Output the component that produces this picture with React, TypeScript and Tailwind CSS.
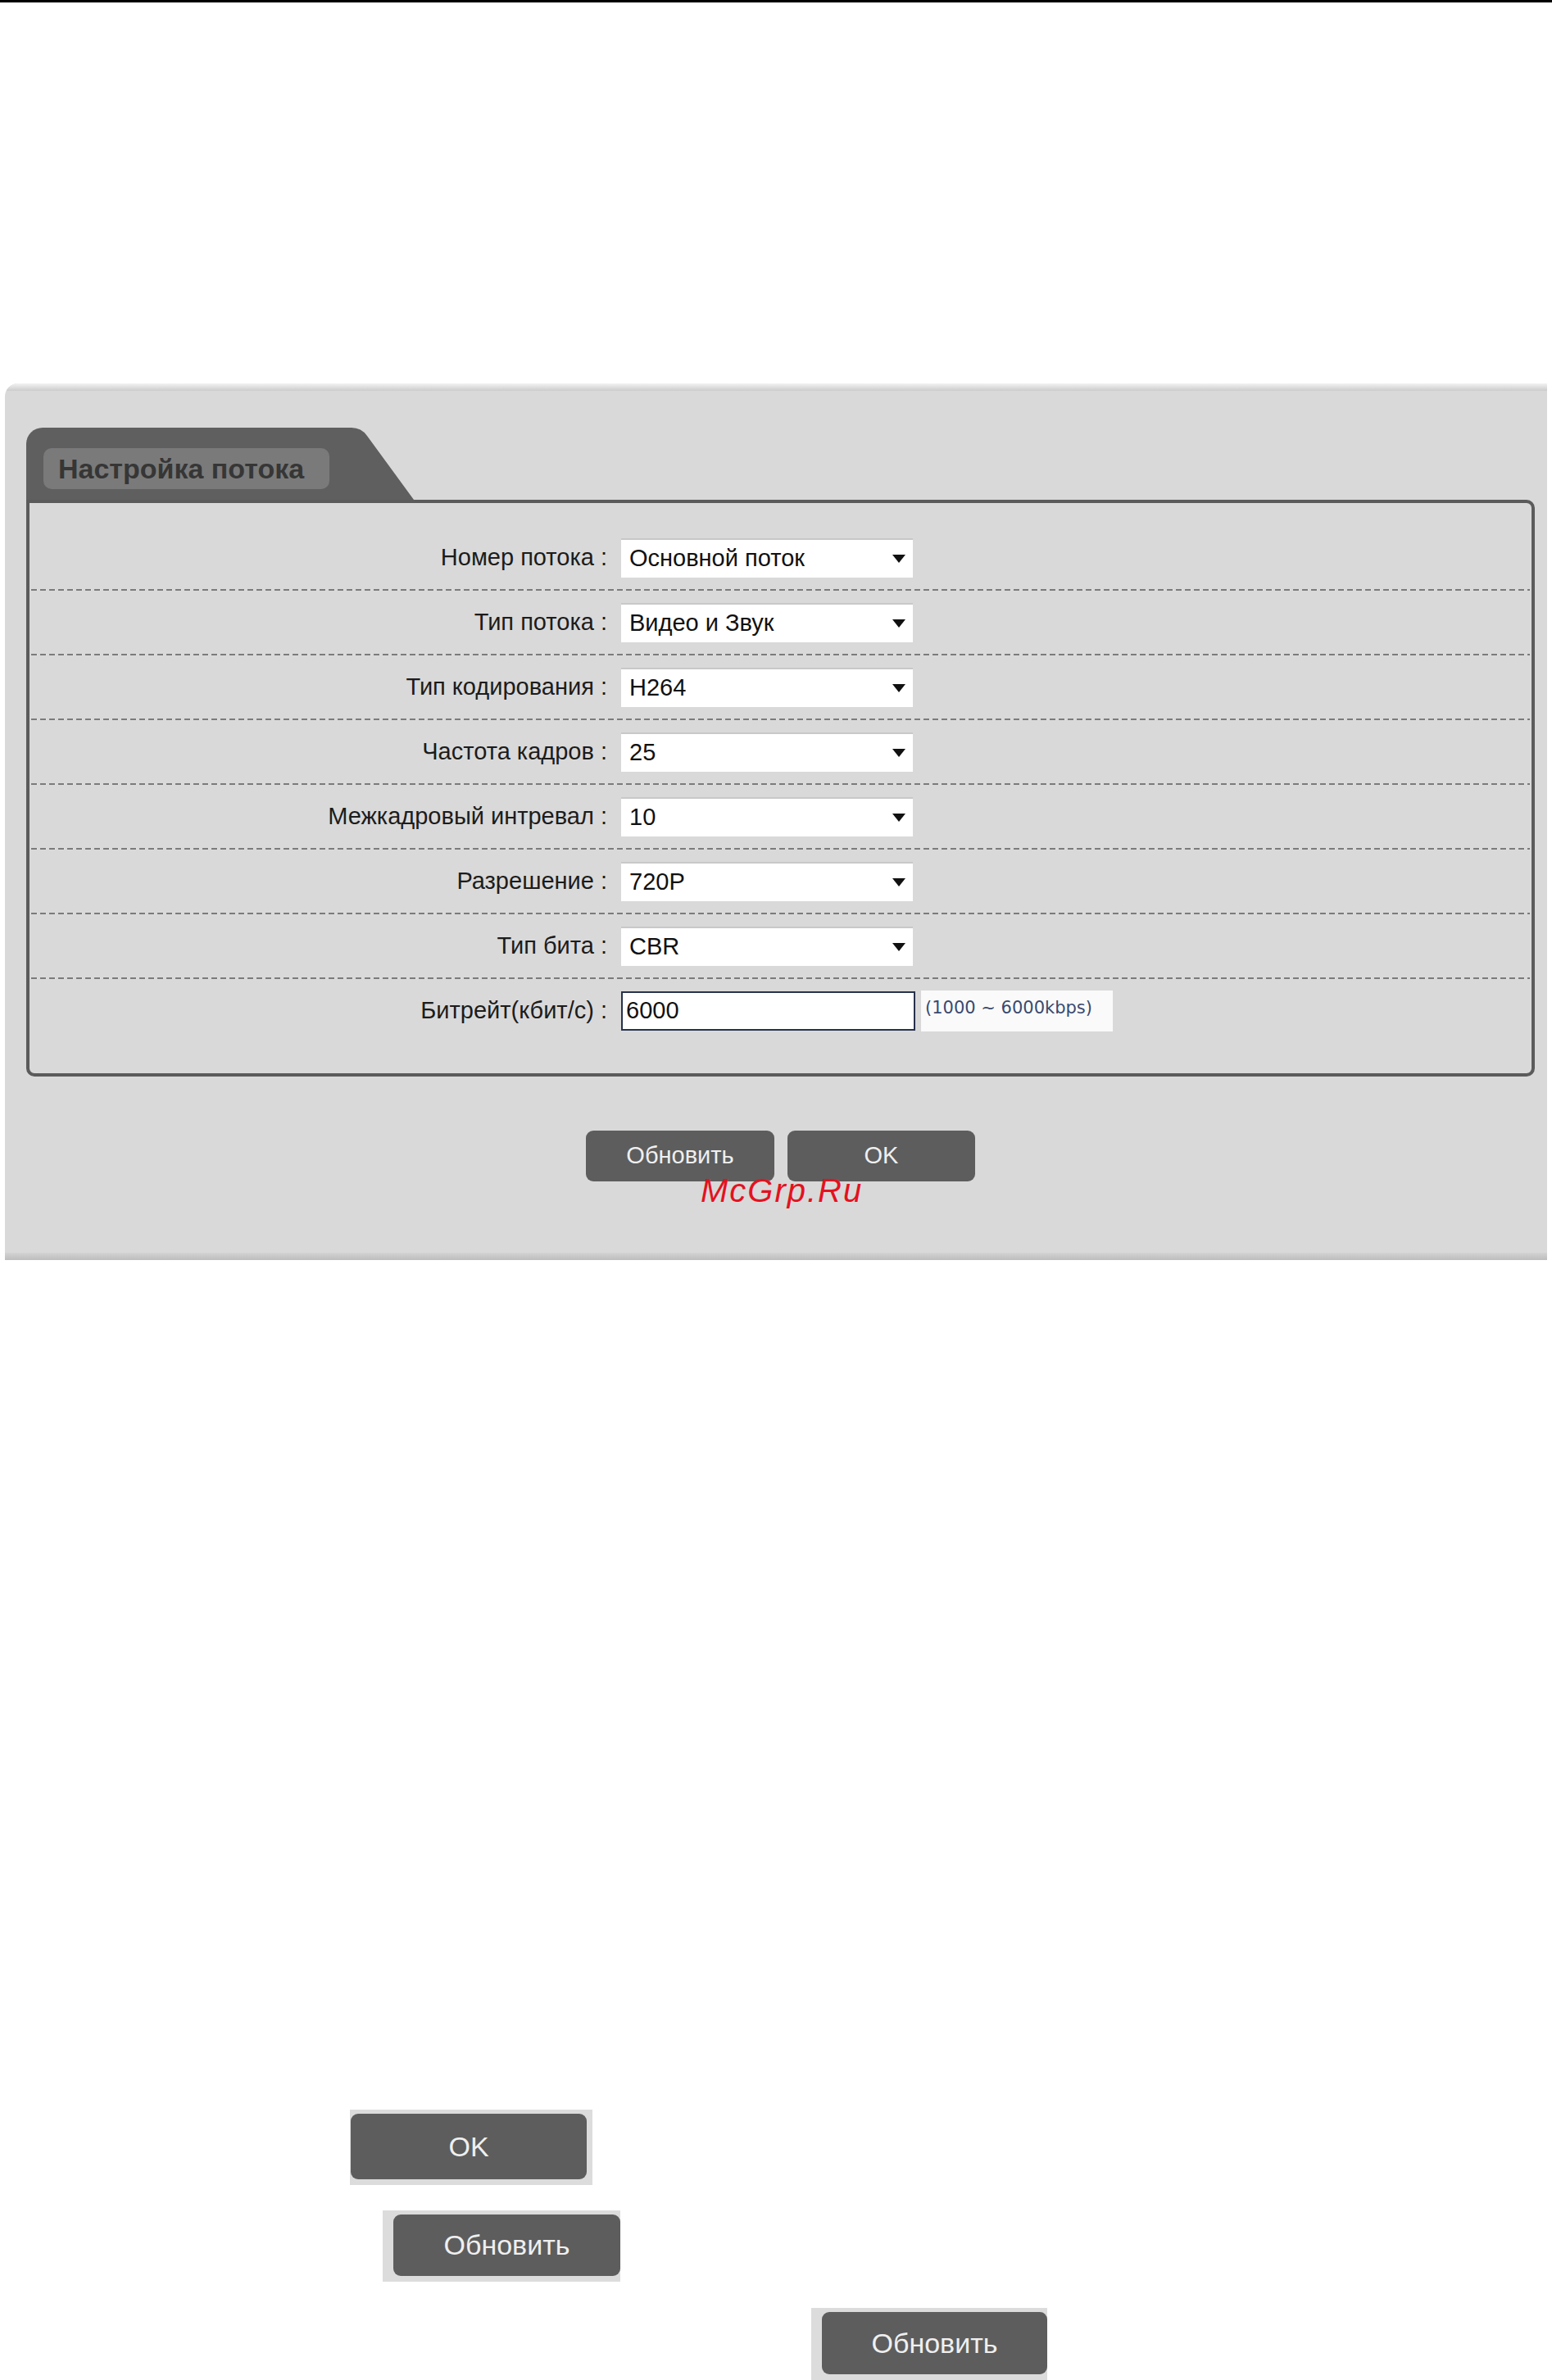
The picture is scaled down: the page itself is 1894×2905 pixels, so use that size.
const rows = [
  { label: "Номер потока", value: "Основной поток" },
  { label: "Тип потока", value: "Видео и Звук" },
  { label: "Тип кодирования", value: "H264" },
  { label: "Частота кадров", value: "25" },
  { label: "Межкадровый интревал", value: "10" },
  { label: "Разрешение", value: "720P" },
  { label: "Тип бита", value: "CBR" },
];

const Dashed = () => (
  <div className="mx-[2px] h-[2px] bg-[repeating-linear-gradient(90deg,#7b7b7b_0px,#7b7b7b_7px,#e4e4e4_7px,#e4e4e4_8px,transparent_8px,transparent_11px)]" />
);

const Select = ({ value }: { value: string }) => (
  <div className="w-[356px] h-[48px] bg-white border-t-2 border-[#c8c8c8] flex items-center justify-between pl-[10px] pr-[9px] text-[29px] text-[#111]">
    <span>{value}</span>
    <svg width="16" height="10" viewBox="0 0 16 10">
      <path d="M0 0H16L8 10Z" fill="#111" />
    </svg>
  </div>
);

const Row = ({ label, children }: { label: string; children: React.ReactNode }) => (
  <div className="h-[77px] flex items-center">
    <div className="w-[705px] text-right text-[29px] text-[#1c1c1c] whitespace-pre">{label} :</div>
    <div className="ml-[17px] flex items-center">{children}</div>
  </div>
);

const DarkButton = ({ label, className }: { label: string; className: string }) => (
  <button className={"bg-[#5d5d5d] rounded-[9px] text-[#efefef] flex items-center justify-center " + className}>
    {label}
  </button>
);

const App = () => {
  return (
    <div className="min-h-[2905px] bg-white font-['Liberation_Sans',Arial,sans-serif]">
      <div className="h-[3px] bg-black" />

      <div className="relative ml-[6px] mt-[465px] w-[1882px] h-[1070px] bg-[#d9d9d9] rounded-tl-[16px] flex flex-col overflow-hidden">
        <div className="h-[9px] bg-gradient-to-b from-[#f3f3f3] to-[#cbcbcb]" />
        <div className="pl-[26px] pr-[15px] pt-[45px]">
          <div className="flex h-[88px]">
            <div className="w-[383px] bg-[#5f5f5f] rounded-tl-[20px] pl-[21px] pt-[25px]">
              <div className="w-[349px] h-[50px] rounded-[10px] bg-[#7a7a7a] pl-[18px] flex items-center text-[34px] font-bold text-[#363636]">
                Настройка потока
              </div>
            </div>
            <svg width="90" height="88" viewBox="0 0 90 88">
              <path d="M0 0H14Q26 0 33 10L90 88H0Z" fill="#5f5f5f" />
            </svg>
          </div>

          <div className="border-[4px] border-[#5b5b5b] rounded-b-[10px] rounded-tr-[10px] pt-[28px] pb-[38px]">
            {rows.map((r) => (
              <div key={r.label}>
                <Row label={r.label}>
                  <Select value={r.value} />
                </Row>
                <Dashed />
              </div>
            ))}
            <Row label="Битрейт(кбит/с)">
              <div className="w-[359px] h-[48px] bg-white border-2 border-[#27324c] flex items-center pl-[4px] text-[29px] text-[#111]">
                6000
              </div>
              <div className="ml-[7px] w-[234px] h-[50px] bg-[#fafafa] flex items-center pl-[5px] pb-[6px] text-[21px] text-[#3a4a70] font-['DejaVu_Sans',Verdana,sans-serif]">
                (1000 ~ 6000kbps)
              </div>
            </Row>
          </div>

          <div className="mt-[66px] flex justify-center gap-[16px]">
            <DarkButton label="Обновить" className="w-[230px] h-[62px] text-[29px]" />
            <DarkButton label="OK" className="w-[229px] h-[62px] text-[29px]" />
          </div>
        </div>

        <div className="mt-auto h-[9px] bg-gradient-to-b from-[#d3d3d3] to-[#bdbdbd]" />

        <div className="absolute left-[849px] top-[965px] text-[40px] leading-none italic tracking-[2px] text-[#e3121f]">
          McGrp.Ru
        </div>
      </div>

      <div className="mt-[1037px] ml-[427px] w-[296px] h-[92px] bg-[#dcdcdc] pl-[1px] pt-[5px]">
        <DarkButton label="OK" className="w-[288px] h-[80px] text-[34px]" />
      </div>
      <div className="mt-[31px] ml-[467px] w-[290px] h-[87px] bg-[#dcdcdc] pl-[13px] pt-[5px]">
        <DarkButton label="Обновить" className="w-[277px] h-[75px] text-[34px]" />
      </div>
      <div className="mt-[32px] ml-[990px] w-[288px] h-[88px] bg-[#dcdcdc] pl-[13px] pt-[5px]">
        <DarkButton label="Обновить" className="w-[275px] h-[76px] text-[34px]" />
      </div>
    </div>
  );
};

export default App;
